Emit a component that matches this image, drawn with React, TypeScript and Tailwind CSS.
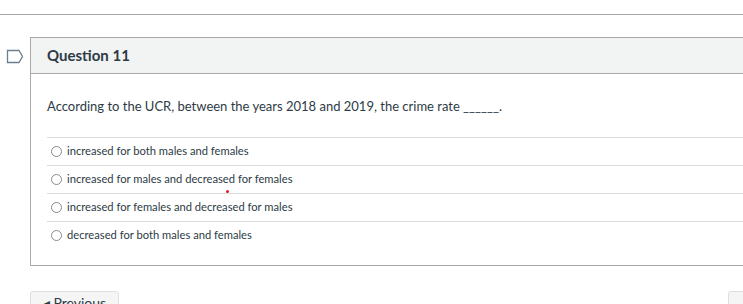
const OPTIONS = [
  "increased for both males and females",
  "increased for males and decreased for females",
  "increased for females and decreased for males",
  "decreased for both males and females",
];

function Flag() {
  return (
    <svg width="18" height="15" viewBox="0 0 18 15" className="shrink-0">
      <path d="M1.5 1.5 H13 L16.5 7.5 L13 13.5 H1.5 Z" fill="none" stroke="#6b7f90" strokeWidth="1.3" />
    </svg>
  );
}

export default function App() {
  return (
    <div
      className="relative h-[304px] w-[743px] overflow-hidden bg-white text-[#2d3b45]"
      style={{ fontFamily: "Lato, 'Open Sans', sans-serif" }}
    >
      <div className="mt-[14px] border-t border-[#a9a9a9]" />

      <div className="mt-[22px] flex">
        <div className="flex w-[30px] shrink-0 justify-start pl-[6px] pt-[12px]">
          <Flag />
        </div>
        <div className="-mr-[20px] flex-1 border-y border-l border-[#a9a9a9]">
          <div className="flex h-[36px] items-center border-b border-[#a9a9a9] bg-[#f2f3f3] pl-[16px]">
            <span className="text-[15px] font-bold">Question 11</span>
          </div>
          <div className="pl-[16px] pb-[16px] pt-[21px]">
            <p className="text-[13px] leading-[22px]">
              According to the UCR, between the years 2018 and 2019, the crime rate ______.
            </p>
            <ul className="mt-[20px]">
              {OPTIONS.map((o) => (
                <li key={o} className="flex h-[28px] items-center border-t border-[#dcdcdc]">
                  <span className="ml-[4px] h-[11px] w-[11px] rounded-full border border-[#8a8a8a] bg-white" />
                  <span className="ml-[5px] text-[11.2px]">{o}</span>
                </li>
              ))}
            </ul>
          </div>
        </div>
      </div>

      <div className="absolute left-[226px] top-[190px] h-[3px] w-[3px] rounded-full bg-[#e3161c]" />

      <div className="mt-[25px] flex items-start justify-between pl-[30px]">
        <div className="flex h-[30px] w-[89px] items-start justify-center rounded-[3px] border border-[#dde0e2] bg-[#f5f5f5] pt-[3px] text-[14px] leading-[16px] text-[#2d3b45]">
          <span>◂ Previous</span>
        </div>
        <div className="-mr-[70px] flex h-[30px] w-[85px] items-start rounded-[3px] border border-[#dde0e2] bg-[#f5f5f5] pl-[9px] pt-[12px]">
          <span className="h-[6px] w-[4px] bg-[#2a6ab5]" />
        </div>
      </div>
    </div>
  );
}
